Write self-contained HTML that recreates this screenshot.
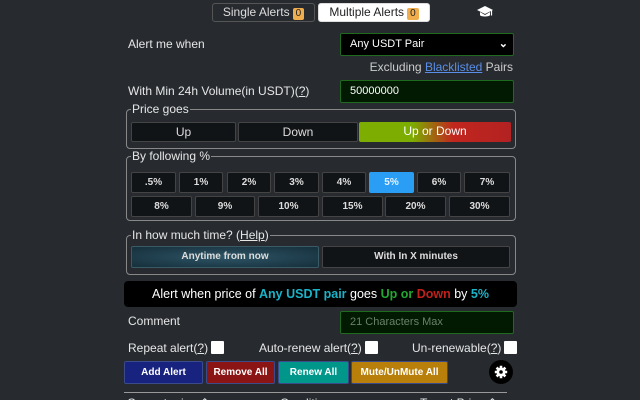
<!DOCTYPE html>
<html style="overflow:hidden;width:640px;height:400px"><head><meta charset="utf-8"><style>
*{box-sizing:border-box;margin:0;padding:0}
body{width:640px;height:400px;overflow:hidden;background:#272b30;font-family:"Liberation Sans",sans-serif;color:#e6e6e6;font-size:12px;position:relative}
.a{position:absolute}
.tab{position:absolute;top:3px;height:19px;border:1px solid #555;border-radius:3px;font-size:12px;text-align:center;line-height:17px}
.badge{display:inline-block;background:#f0ad4e;color:#222;font-size:10px;padding:0 3px;line-height:12px;border-radius:2px;margin-left:3px}
.inp{position:absolute;left:340px;width:174px;height:23px;border:1px solid #1e6b1e;border-radius:2px;font-size:11px;padding-left:9px;line-height:21px}
fieldset{position:absolute;left:126px;width:390px;border:1px solid #888;border-radius:4px}
legend{font-size:12px;color:#e6e6e6;margin-left:4px;padding:0 1px;line-height:11px}
.b{position:absolute;background:#111417;border:1px solid #444;border-radius:2px;color:#ddd;text-align:center;font-size:12px}
.bb{font-weight:bold;font-size:10px}
.act{position:absolute;top:361px;height:23px;border:1px solid #3a4a8a;border-radius:2px;color:#fff;font-weight:bold;font-size:10px;text-align:center;line-height:21px}
.cb{display:inline-block;width:13px;height:13px;background:#fff;border-radius:1px;vertical-align:-2px;margin-left:3px}
u{text-decoration:underline}
</style></head><body>
<div class="tab" style="left:212px;width:103px;color:#ddd">Single Alerts<span class="badge">0</span></div>
<div class="tab" style="left:318px;width:112px;background:#fff;color:#222;border-color:#ddd">Multiple Alerts<span class="badge">0</span></div>
<svg class="a" style="left:477px;top:6px" width="16" height="12" viewBox="0 0 16 12"><path d="M8 0L16 4L8 8L0 4Z" fill="#fff"/><path d="M3 6v3c0 2 10 2 10 0V6L8 9Z" fill="#fff"/><path d="M14.5 4.5v5" stroke="#fff" stroke-width="1.2"/></svg>

<div class="a" style="left:128px;top:37px">Alert me when</div>
<div class="inp" style="top:33px;background:#000;color:#fff">Any USDT Pair<span class="a" style="right:5px;top:0;font-weight:bold">&#8964;</span></div>
<div class="a" style="right:127px;top:60px;color:#ccc">Excluding <u style="color:#5b8ee6">Blacklisted</u> Pairs</div>
<div class="a" style="left:128px;top:84px">With Min 24h Volume(in USDT)(<u>?</u>)</div>
<div class="inp" style="top:80px;background:#021a02;color:#fff">50000000</div>

<fieldset style="top:104px;height:45px"><legend>Price goes</legend></fieldset>
<div class="b" style="left:131px;top:122px;width:105px;height:20px;line-height:18px">Up</div>
<div class="b" style="left:238px;top:122px;width:120px;height:20px;line-height:18px">Down</div>
<div class="b" style="left:359px;top:122px;width:152px;height:20px;line-height:19px;border:none;color:#fff;background:linear-gradient(90deg,#7cad00 0%,#7cad00 35%,#c2261e 62%,#b22222 100%)">Up or Down</div>

<fieldset style="top:151px;height:70px"><legend>By following %</legend></fieldset>
<div class="b bb" style="left:131px;top:172px;width:45px;height:21px;line-height:19px">.5%</div>
<div class="b bb" style="left:179px;top:172px;width:44px;height:21px;line-height:19px">1%</div>
<div class="b bb" style="left:227px;top:172px;width:44px;height:21px;line-height:19px">2%</div>
<div class="b bb" style="left:274px;top:172px;width:45px;height:21px;line-height:19px">3%</div>
<div class="b bb" style="left:322px;top:172px;width:44px;height:21px;line-height:19px">4%</div>
<div class="b bb" style="left:369px;top:172px;width:45px;height:21px;line-height:19px;background:#2a9df4;border-color:#2a9df4;color:#e8f4ff">5%</div>
<div class="b bb" style="left:417px;top:172px;width:44px;height:21px;line-height:19px">6%</div>
<div class="b bb" style="left:464px;top:172px;width:46px;height:21px;line-height:19px">7%</div>
<div class="b bb" style="left:131px;top:196px;width:61px;height:21px;line-height:19px">8%</div>
<div class="b bb" style="left:195px;top:196px;width:60px;height:21px;line-height:19px">9%</div>
<div class="b bb" style="left:258px;top:196px;width:61px;height:21px;line-height:19px">10%</div>
<div class="b bb" style="left:322px;top:196px;width:61px;height:21px;line-height:19px">15%</div>
<div class="b bb" style="left:385px;top:196px;width:61px;height:21px;line-height:19px">20%</div>
<div class="b bb" style="left:449px;top:196px;width:61px;height:21px;line-height:19px">30%</div>

<fieldset style="top:230px;height:45px"><legend>In how much time? (<u>Help</u>)</legend></fieldset>
<div class="b bb" style="left:131px;top:246px;width:188px;height:22px;line-height:20px;background:radial-gradient(ellipse at center,#2e5566 0%,#1d3a48 70%,#16303c 100%);border-color:#3a5a66">Anytime from now</div>
<div class="b bb" style="left:322px;top:246px;width:188px;height:22px;line-height:20px">With In X minutes</div>

<div class="a" style="left:124px;top:281px;width:393px;height:26px;background:#000;border-radius:4px;text-align:center;line-height:26px;font-size:12.5px;color:#fff">Alert when price of <b style="color:#1bb3c8">Any USDT pair</b> goes <b style="color:#22a830">Up or</b> <b style="color:#c0201a">Down</b> by <b style="color:#1bb3c8">5%</b></div>

<div class="a" style="left:128px;top:314px">Comment</div>
<div class="inp" style="top:311px;background:#021a02;color:#6a806a">21 Characters Max</div>

<div class="a" style="left:128px;top:341px">Repeat alert(<u>?</u>)<span class="cb"></span></div>
<div class="a" style="left:259px;top:341px">Auto-renew alert(<u>?</u>)<span class="cb"></span></div>
<div class="a" style="left:412px;top:341px">Un-renewable(<u>?</u>)<span class="cb"></span></div>

<div class="act" style="left:124px;width:79px;background:#17237e">Add Alert</div>
<div class="act" style="left:206px;width:69px;background:#8b1414">Remove All</div>
<div class="act" style="left:278px;width:71px;background:#00968a">Renew All</div>
<div class="act" style="left:351px;width:97px;background:#b8800b">Mute/UnMute All</div>
<div class="a" style="left:489px;top:360px;width:24px;height:24px;border-radius:50%;background:#000"></div>
<svg class="a" style="left:494px;top:365px" width="14" height="14" viewBox="0 0 14 14"><g fill="#fff"><circle cx="7" cy="7" r="4.5"/><g stroke="#fff" stroke-width="2.6"><path d="M7 0.8v12.4M0.8 7h12.4M2.6 2.6l8.8 8.8M11.4 2.6l-8.8 8.8"/></g></g><circle cx="7" cy="7" r="1.8" fill="#000"/></svg>

<div class="a" style="left:124px;top:392px;width:383px;height:1px;background:#999"></div>
<div class="a" style="left:127px;top:396px">Current price ⇕</div>
<div class="a" style="left:280px;top:396px">Condition</div>
<div class="a" style="left:420px;top:396px">Target Price ⇕</div>
</body></html>
